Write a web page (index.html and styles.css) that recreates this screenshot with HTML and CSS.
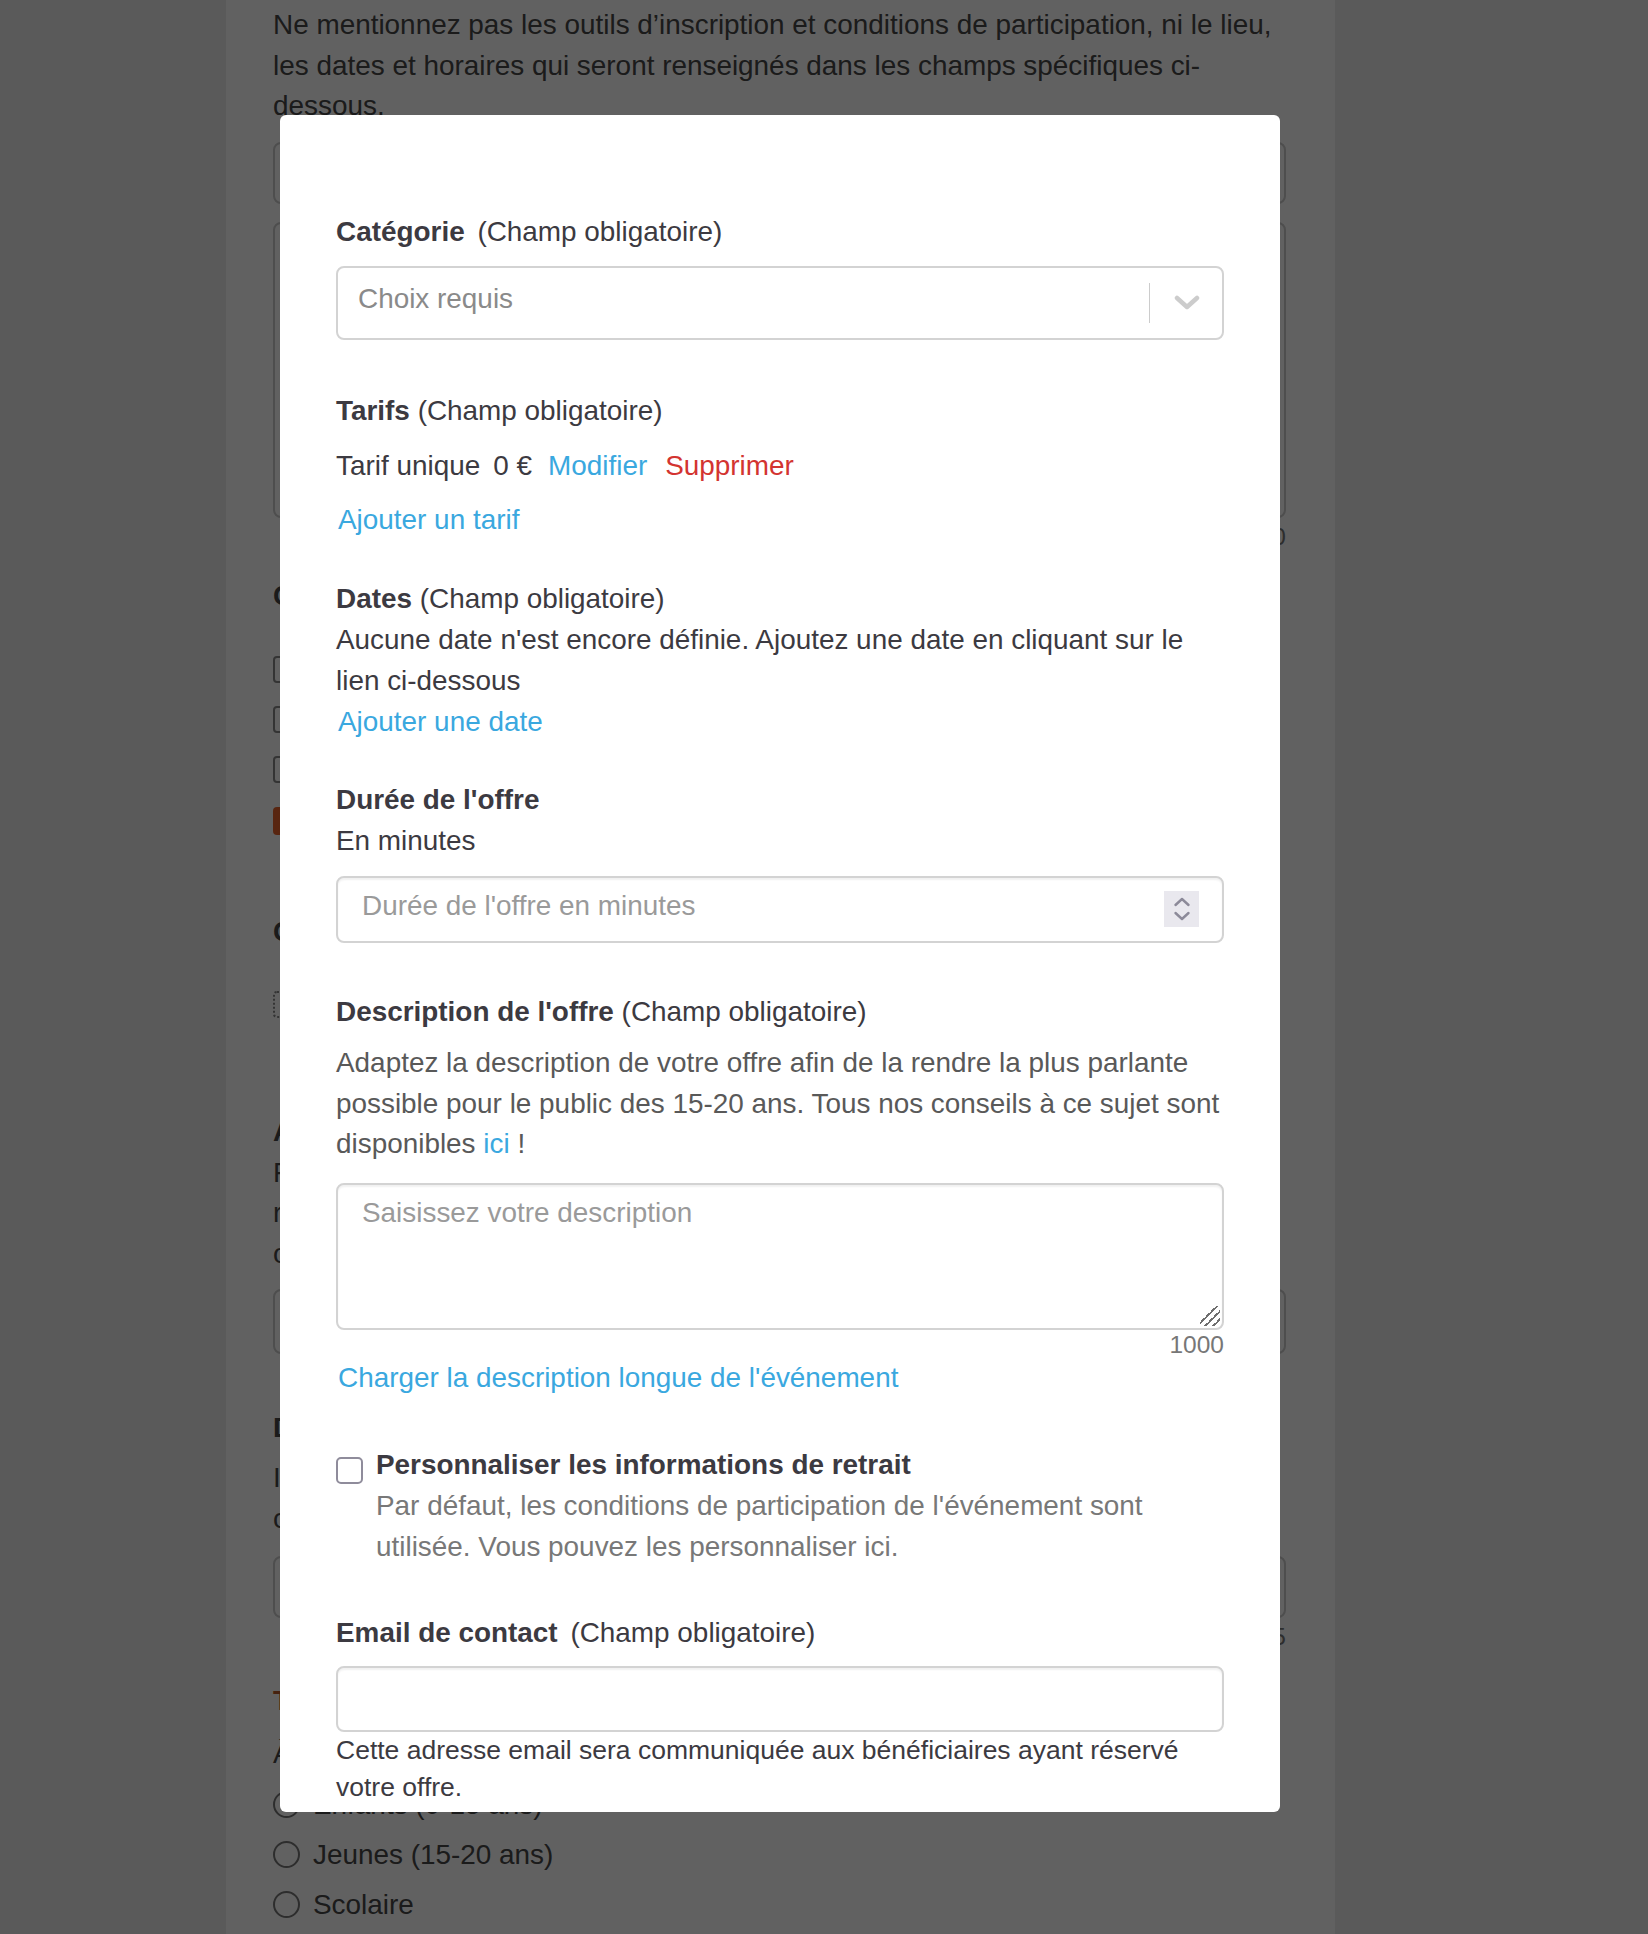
FILE: index.html
```html
<!DOCTYPE html>
<html lang="fr">
    <head>
        <meta charset="utf-8">
        <meta name="viewport" content="width=device-width, initial-scale=1.0">
        <title>Nouvelle offre</title>
        <link rel="stylesheet" href="styles.css">
    </head>
    <body>
        <!-- page behind the dialog -->
        <div class="page">
            <p class="bgText">Décrivez le contenu de votre offre et son déroulé pour les jeunes.</p>
            <p class="bgText">Ne mentionnez pas les outils d’inscription et conditions de participation, ni le lieu, les dates et horaires qui seront renseignés dans les champs spécifiques ci-dessous.</p>
            <div class="bgInput"></div>
            <div class="bgInput bgArea"></div>
            <div class="bgCount">0</div>

            <h3 class="bgTitle first">Conditions de participation</h3>
            <div class="bgChecks">
                <label class="bgRow"><input type="checkbox" class="bgBox"> Inscription obligatoire</label>
                <label class="bgRow"><input type="checkbox" class="bgBox"> Réservation par téléphone</label>
                <label class="bgRow"><input type="checkbox" class="bgBox"> Réservation en ligne</label>
            </div>
            <a href="#" class="bgButton">+ Ajouter une condition</a>

            <h3 class="bgTitle second">Contact</h3>
            <label class="bgRow dotted"><input type="checkbox" class="bgBox"> Utiliser le contact de l'organisateur</label>

            <h3 class="bgTitle third">Accessibilité</h3>
            <p class="bgText">Facultatif : précisez les modalités d'accueil<br>
                réservées aux personnes en situation de handicap<br>
                ou à mobilité réduite.</p>
            <div class="bgInput small"></div>

            <h3 class="bgTitle fourth">Durée de l'événement</h3>
            <p class="bgText intro">Indiquez la durée approximative de l'événement,<br>
                ce champ est facultatif.</p>
            <div class="bgInput small last"></div>
            <div class="bgCount">5</div>

            <h3 class="bgTitle accent">Type de public</h3>
            <p class="bgText short">À qui s'adresse cette offre ?</p>
            <div class="bgRadios">
                <label class="bgRadio"><input type="radio" name="public"> Enfants (0-15 ans)</label>
                <label class="bgRadio"><input type="radio" name="public"> Jeunes (15-20 ans)</label>
                <label class="bgRadio"><input type="radio" name="public"> Scolaire</label>
            </div>
        </div>

        <div class="overlay"></div>

        <div class="modal">
            <div class="field">
                <div class="label"><strong>Catégorie</strong> <span class="wide">(Champ obligatoire)</span></div>
                <div class="select">
                    <span class="placeholder">Choix requis</span>
                    <span class="sep"></span>
                    <svg class="chevron" width="26" height="16" viewBox="0 0 26 16">
                        <path d="M3 3 L13 12 L23 3" fill="none" stroke="#cccccc" stroke-width="4.5" stroke-linecap="round" stroke-linejoin="round"/>
                    </svg>
                </div>
            </div>

            <div class="field tarifs">
                <div class="label"><strong>Tarifs</strong> (Champ obligatoire)</div>
                <div class="tarif">
                    <span>Tarif unique</span>
                    <span>0 €</span>
                    <a href="#" class="link">Modifier</a>
                    <a href="#" class="link danger">Supprimer</a>
                </div>
                <a href="#" class="link add">Ajouter un tarif</a>
            </div>

            <div class="field dates">
                <div class="label"><strong>Dates</strong> (Champ obligatoire)</div>
                <p class="text">Aucune date n'est encore définie. Ajoutez une date en cliquant sur le lien ci-dessous</p>
                <a href="#" class="link addLine">Ajouter une date</a>
            </div>

            <div class="field duree">
                <div class="label"><strong>Durée de l'offre</strong></div>
                <p class="text">En minutes</p>
                <div class="numField">
                    <input type="text" placeholder="Durée de l'offre en minutes">
                    <span class="spin">
                        <svg width="35" height="36" viewBox="0 0 35 36">
                            <path d="M11.5 14 L18 8 L24.5 14 M11.5 22 L18 28 L24.5 22" fill="none" stroke="#8c8a99" stroke-width="2.4" stroke-linecap="round" stroke-linejoin="round"/>
                        </svg>
                    </span>
                </div>
            </div>

            <div class="field description">
                <div class="label"><strong>Description de l'offre</strong> (Champ obligatoire)</div>
                <p class="hint">Adaptez la description de votre offre afin de la rendre la plus parlante possible pour le public des 15-20 ans. Tous nos conseils à ce sujet sont disponibles <a href="#" class="link">ici</a> !</p>
                <textarea class="area" placeholder="Saisissez votre description"></textarea>
                <div class="counter">1000</div>
                <a href="#" class="link loadLong">Charger la description longue de l'événement</a>
            </div>

            <div class="field check">
                <input type="checkbox" class="box" id="retrait">
                <div>
                    <label for="retrait" class="label"><strong>Personnaliser les informations de retrait</strong></label>
                    <p class="muted">Par défaut, les conditions de participation de l'événement sont utilisée. Vous pouvez les personnaliser ici.</p>
                </div>
            </div>

            <div class="field email">
                <div class="label"><strong>Email de contact</strong> <span class="wide">(Champ obligatoire)</span></div>
                <input type="email" class="input">
                <p class="small">Cette adresse email sera communiquée aux bénéficiaires ayant réservé votre offre.</p>
            </div>
        </div>
    </body>
</html>
```

FILE: styles.css
```css
body{
    margin: 0;
    background-color: #ededed;
    font-family: "Liberation Sans", Arial, Helvetica, sans-serif;
    font-size: 27.9px;
    line-height: 40.8px;
    color: #3c3a41;
}

/* background page */
.page{
    margin-left: 226px;
    width: 1013px;
    min-height: 1934px;
    padding: 0 49px 0 47px;
    background-color: #fff;
    color: #474747;
    overflow: hidden;
}
.bgText{
    margin: 0;
}
.bgText:first-child{
    margin-top: -36px;
}
.bgInput{
    margin-top: 15px;
    height: 62px;
    border: 2px solid #cccccc;
    border-radius: 8px;
    box-sizing: border-box;
}
.bgArea{
    margin-top: 18px;
    height: 296px;
}
.bgInput.small{
    margin-top: 14px;
    height: 65px;
}
.bgInput.small.last{
    margin-top: 17px;
    height: 62px;
}
.bgCount{
    text-align: right;
    font-size: 24.5px;
    line-height: 38px;
    color: #777;
}
.bgTitle{
    margin: 20px 0 0 0;
    font-size: 27.9px;
    font-weight: bold;
}
.bgTitle.second{
    margin-top: 77px;
}
.bgTitle.third{
    margin-top: 94px;
}
.bgTitle.fourth{
    margin-top: 54px;
}
.bgTitle.accent{
    margin-top: 25px;
    color: #b85a2a;
}
.bgChecks{
    margin-top: 28px;
}
.bgRow{
    display: flex;
    align-items: center;
    gap: 13px;
    height: 50px;
}
.bgRow.dotted{
    margin-top: 39px;
    height: 26px;
}
.bgBox{
    appearance: none;
    margin: 0;
    width: 27px;
    height: 27px;
    border: 2px solid #888;
    border-radius: 4px;
}
.dotted .bgBox{
    border-style: dotted;
}
.bgButton{
    display: block;
    width: max-content;
    margin-top: 12px;
    height: 28px;
    line-height: 28px;
    padding: 0 14px;
    font-size: 17px;
    color: #fff;
    text-decoration: none;
    background-color: #e8632c;
    border-radius: 4px;
}
.bgText.intro{
    margin-top: 9px;
}
.bgText.short{
    margin-top: 12px;
}
.bgRadios{
    margin-top: 5px;
}
.bgRadio{
    display: flex;
    align-items: center;
    gap: 13px;
    height: 50px;
}
.bgRadio input{
    appearance: none;
    margin: 0;
    width: 27px;
    height: 27px;
    border: 2px solid #777;
    border-radius: 50%;
}

/* dialog */
.overlay{
    position: fixed;
    top: 0;
    left: 0;
    right: 0;
    bottom: 0;
    background-color: rgba(0, 0, 0, .62);
}
.modal{
    position: fixed;
    top: 115px;
    left: 280px;
    width: 1000px;
    height: 1697px;
    box-sizing: border-box;
    padding: 97px 56px 0 56px;
    background-color: #fff;
    border-radius: 6px;
    overflow: hidden;
}
.label{
    display: block;
    color: #3c3a41;
}
.label strong{
    font-weight: bold;
}
.wide{
    margin-left: 5px;
}
.text, .hint, .muted, .small{
    margin: 0;
}
.hint{
    margin-top: 10px;
    color: #595959;
}
.muted{
    color: #787878;
}
.small{
    font-size: 26.5px;
    line-height: 37px;
}
.link{
    color: #3aa8df;
    text-decoration: none;
}
.link.danger{
    color: #d33430;
}
.link.add, .link.addLine, .link.loadLong{
    display: block;
    padding-left: 2px;
}

.select{
    display: flex;
    align-items: center;
    margin-top: 13px;
    height: 74px;
    padding-left: 20px;
    box-sizing: border-box;
    border: 2px solid #d3d3d3;
    border-radius: 8px;
}
.select .placeholder{
    flex: 1;
    margin-bottom: 7px;
    color: #8a8a8a;
}
.select .sep{
    width: 1px;
    height: 40px;
    background-color: #cccccc;
}
.chevron{
    margin: 0 22px 0 24px;
}

.tarifs{
    margin-top: 51px;
}
.tarif{
    display: flex;
    gap: 13px;
    margin-top: 14px;
}
.tarif .link{
    margin-left: 3px;
}
.tarif .link.danger{
    margin-left: 5px;
}
.link.add{
    margin-top: 14px;
}

.dates{
    margin-top: 38px;
}
.duree{
    margin-top: 38px;
}
.numField{
    display: flex;
    align-items: center;
    margin-top: 14px;
    height: 67px;
    box-sizing: border-box;
    border: 2px solid #d3d3d3;
    border-radius: 8px;
    box-shadow: inset 0 2px 2px rgba(0, 0, 0, .06);
}
.numField input{
    flex: 1;
    min-width: 0;
    height: 100%;
    padding: 0 24px 6px 24px;
    border: none;
    outline: none;
    background: transparent;
    font-family: inherit;
    font-size: 27.9px;
    color: #3c3a41;
}
.spin{
    display: flex;
    margin-right: 23px;
    background-color: #e9e8ee;
}
::placeholder{
    color: #9a9a9a;
    opacity: 1;
}

.description{
    margin-top: 49px;
}
.area{
    display: block;
    width: 100%;
    height: 147px;
    margin-top: 18px;
    padding: 8px 24px;
    box-sizing: border-box;
    border: 2px solid #d3d3d3;
    border-radius: 8px;
    box-shadow: inset 0 2px 2px rgba(0, 0, 0, .06);
    font-family: inherit;
    font-size: 27.9px;
    line-height: 40.8px;
    resize: none;
    outline: none;
    /* grip in the corner */
    background-image: linear-gradient(135deg, transparent 40%, #6e6e6e 40%, #6e6e6e 47%, transparent 47%, transparent 60%, #6e6e6e 60%, #6e6e6e 67%, transparent 67%, transparent 80%, #6e6e6e 80%, #6e6e6e 87%, transparent 87%);
    background-size: 20px 20px;
    background-position: right 2px bottom 2px;
    background-repeat: no-repeat;
}
.counter{
    padding-top: 1px;
    text-align: right;
    font-size: 24.5px;
    line-height: 28px;
    color: #777;
}
.link.loadLong{
    margin-top: -1px;
}

.check{
    display: flex;
    align-items: flex-start;
    margin-top: 46px;
}
.box{
    appearance: none;
    flex: none;
    margin: 12px 13px 0 0;
    width: 27px;
    height: 27px;
    box-sizing: border-box;
    border: 2px solid #8f8c9b;
    border-radius: 5px;
}

.email{
    margin-top: 46px;
}
.input{
    display: block;
    width: 100%;
    height: 66px;
    margin-top: 12px;
    box-sizing: border-box;
    border: 2px solid #d3d3d3;
    border-radius: 8px;
    box-shadow: inset 0 2px 2px rgba(0, 0, 0, .06);
    outline: none;
}
```
